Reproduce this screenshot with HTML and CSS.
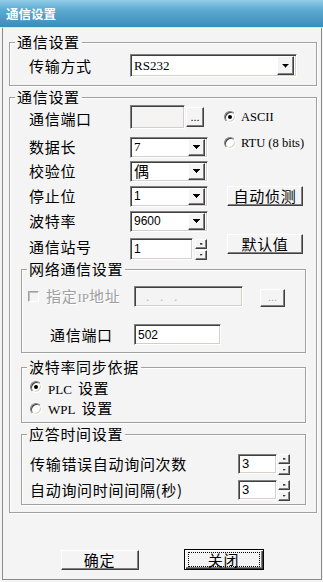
FILE: index.html
```html
<!DOCTYPE html>
<html lang="zh-CN">
<head>
  <meta charset="UTF-8">
  <title>通信设置</title>
  <link rel="stylesheet" href="styles.css">
</head>
<body>
  <div class="window">
    <div class="titlebar">通信设置</div>

    <div class="frame">
      <!-- transport -->
      <fieldset class="group outer group-top">
        <legend>通信设置</legend>
        <div class="top-body">
          <div class="row">
            <span class="label">传输方式</span>
            <div class="select sunken wide"><span class="value latin">RS232</span><span class="drop raised"></span></div>
          </div>
        </div>
      </fieldset>

      <!-- main settings -->
      <fieldset class="group outer group-main">
        <legend>通信设置</legend>
        <div class="main-body">
          <div class="row r1">
            <span class="label">通信端口</span>
            <div class="ctrl">
              <div class="field sunken off com-box"></div>
              <div class="mini-btn raised">...</div>
            </div>
            <div class="radio-item"><span class="radio on"></span><span class="latin">ASCII</span></div>
          </div>
          <div class="row r2">
            <span class="label">数据长</span>
            <div class="ctrl">
              <div class="select sunken"><span class="value latin">7</span><span class="drop raised"></span></div>
            </div>
            <div class="radio-item rtu"><span class="radio"></span><span class="latin">RTU (8 bits)</span></div>
          </div>
          <div class="row r3">
            <span class="label">校验位</span>
            <div class="ctrl">
              <div class="select sunken"><span class="value">偶</span><span class="drop raised"></span></div>
            </div>
          </div>
          <div class="row r4">
            <span class="label">停止位</span>
            <div class="ctrl">
              <div class="select sunken"><span class="value num">1</span><span class="drop raised"></span></div>
            </div>
            <div class="btn raised side-btn">自动侦测</div>
          </div>
          <div class="row r5">
            <span class="label">波特率</span>
            <div class="ctrl">
              <div class="select sunken"><span class="value num">9600</span><span class="drop raised"></span></div>
            </div>
          </div>
          <div class="row r6">
            <span class="label">通信站号</span>
            <div class="ctrl">
              <div class="field sunken station num">1</div>
              <div class="spin">
                <span class="spin-up raised"></span>
                <span class="spin-down raised"></span>
              </div>
            </div>
            <div class="btn raised side-btn default-btn">默认值</div>
          </div>

          <fieldset class="group inner net-group">
            <legend>网络通信设置</legend>
            <div class="net-body">
              <div class="ip-row">
                <div class="check-item off-text"><span class="check"></span><span>指定<span class="latin">IP</span>地址</span></div>
                <div class="field sunken off ip-box"><span>.</span><span>.</span><span>.</span></div>
                <div class="mini-btn raised ip-btn off-text">...</div>
              </div>
              <div class="port-row">
                <span class="port-label">通信端口</span>
                <div class="field sunken port-box num">502</div>
              </div>
            </div>
          </fieldset>

          <fieldset class="group inner baud-group">
            <legend>波特率同步依据</legend>
            <div class="baud-body">
              <div class="radio-row first"><span class="radio on"></span><span class="radio-text"><span class="latin">PLC</span> 设置</span></div>
              <div class="radio-row"><span class="radio"></span><span class="radio-text"><span class="latin">WPL</span> 设置</span></div>
            </div>
          </fieldset>

          <fieldset class="group inner reply-group">
            <legend>应答时间设置</legend>
            <div class="reply-body">
              <div class="reply-row">
                <span class="reply-label">传输错误自动询问次数</span>
                <div class="field sunken small-box num">3</div>
                <div class="spin">
                  <span class="spin-up raised"></span>
                  <span class="spin-down raised"></span>
                </div>
              </div>
              <div class="reply-row second">
                <span class="reply-label">自动询问时间间隔(秒)</span>
                <div class="field sunken small-box num">3</div>
                <div class="spin">
                  <span class="spin-up raised"></span>
                  <span class="spin-down raised"></span>
                </div>
              </div>
            </div>
          </fieldset>
        </div>
      </fieldset>

      <div class="actions">
        <div class="btn raised ok-btn">确定</div>
        <div class="btn close-btn"><span class="focus">关闭</span></div>
      </div>
    </div>
  </div>
</body>
</html>
```

FILE: styles.css
```css
* {
  box-sizing: border-box;
}

body {
  margin: 0;
  width: 323px;
  height: 582px;
  overflow: hidden;
  background: #f4f4f4;
  color: #000;
  font-family: "Noto Sans CJK SC", "Liberation Sans", sans-serif;
  font-size: 15px;
  line-height: 16px;
  letter-spacing: 0.7px;
  white-space: nowrap;
}

.window {
  height: 582px;
  display: flex;
  flex-direction: column;
}

.titlebar {
  height: 28px;
  padding-left: 6px;
  background: linear-gradient(#92cde8, #5eabd3 35%, #3a8cb9);
  border-bottom: 1px solid #d6e9f3;
  color: #fff;
  font-size: 12.5px;
  font-weight: bold;
  line-height: 27px;
  letter-spacing: 0;
}

.frame {
  flex: 1;
  display: flex;
  flex-direction: column;
  margin: 0 1px 2px 2px;
  border: 1px solid #8a8a8a;
  border-top: none;
}

/* group boxes */
.group {
  margin: 0;
  padding: 0;
  min-width: 0;
  border: 1px solid #a0a0a0;
  box-shadow: 1px 1px 0 #fff, inset 1px 1px 0 #fff;
}

.group legend {
  margin-left: 6px;
  padding: 0 2px;
  line-height: 16px;
  background: #f4f4f4;
}

.group.outer {
  margin: 0 4px 0 6px;
}

.group.outer legend {
  margin-left: 5px;
}

.group-top {
  margin-top: 6px !important;
}

.group-main {
  margin-top: 3px !important;
}

.top-body {
  padding: 4px 0 8px 19px;
}

.top-body .row {
  height: 23px;
}

.main-body {
  padding: 0 10px 7px 11px;
}

.row {
  display: flex;
  align-items: center;
  height: 22px;
}

.main-body .row {
  padding-left: 8px;
}

.r1 { height: 24px; }
.r2 { margin-top: 7px; }
.r3 { margin-top: 2px; }
.r4 { margin-top: 3px; }
.r5 { margin-top: 3px; }
.r6 { margin-top: 6px; }

.label {
  width: 101px;
  flex: none;
}

.r1 .label {
  padding-top: 4px;
}

.r6 .label {
  padding-bottom: 4px;
}

.ctrl {
  width: 94px;
  flex: none;
  display: flex;
  align-items: center;
}

.latin {
  font-family: "Liberation Serif", serif;
  font-size: 13px;
  letter-spacing: 0;
}

.num {
  font-family: "Liberation Sans", sans-serif;
  font-size: 12px;
  letter-spacing: 0;
}

/* 3d borders */
.sunken {
  background: #fff;
  border: 1px solid;
  border-color: #808080 #fff #fff #808080;
  box-shadow: inset 1px 1px 0 #404040, inset -1px -1px 0 #d4d0c8;
}

.raised {
  background: #f4f4f4;
  border: 1px solid;
  border-color: #fff #404040 #404040 #fff;
  box-shadow: inset -1px -1px 0 #808080;
}

/* dropdowns */
.select {
  display: flex;
  align-items: center;
  width: 78px;
  height: 21px;
  padding: 2px;
}

.select.wide {
  width: 167px;
  height: 23px;
}

.select .value {
  flex: 1;
  padding-left: 1px;
}

.drop {
  width: 17px;
  height: 17px;
  flex: none;
  display: flex;
  align-items: center;
  justify-content: center;
}

.select.wide .drop {
  height: 19px;
}

.drop::after {
  content: "";
  width: 7px;
  height: 4px;
  background: #000;
  clip-path: polygon(0 0, 7px 0, 7px 1px, 6px 1px, 6px 2px, 5px 2px, 5px 3px, 4px 3px, 4px 4px, 3px 4px, 3px 3px, 2px 3px, 2px 2px, 1px 2px, 1px 1px, 0 1px);
}

/* text fields */
.field {
  display: flex;
  align-items: center;
  padding-left: 3px;
}

.field.off {
  background: #f4f4f4;
}

.com-box {
  width: 55px;
  height: 24px;
}

.mini-btn {
  display: flex;
  justify-content: center;
  align-items: flex-end;
  padding-bottom: 3px;
  font-family: "Liberation Sans", sans-serif;
  font-size: 11px;
  line-height: 11px;
  letter-spacing: 0;
}

.r1 .mini-btn {
  width: 18px;
  height: 20px;
  margin-left: 1px;
}

.station {
  width: 63px;
  height: 22px;
}

.spin {
  display: flex;
  flex-direction: column;
  gap: 1px;
  width: 12px;
  margin-left: 2px;
}

.spin span {
  height: 10px;
  display: flex;
  align-items: center;
  justify-content: center;
}

.spin-up::after,
.spin-down::after {
  content: "";
  width: 3px;
  height: 2px;
  background: #000;
}

.spin-up::after {
  clip-path: polygon(1px 0, 2px 0, 2px 1px, 3px 1px, 3px 2px, 0 2px, 0 1px, 1px 1px);
}

.spin-down::after {
  clip-path: polygon(0 0, 3px 0, 3px 1px, 2px 1px, 2px 2px, 1px 2px, 1px 1px, 0 1px);
}

/* radios */
.radio-item,
.radio-row {
  display: flex;
  align-items: center;
  gap: 5px;
}

.radio-item {
  flex: none;
}

.radio-item .latin {
  font-size: 12.5px;
}

.rtu {
  margin-top: -8px;
}

.radio {
  width: 12px;
  height: 12px;
  flex: none;
  border-radius: 50%;
  background: #fff;
  border: 1px solid;
  border-color: #808080 #fff #fff #808080;
  box-shadow: inset 1px 1px 0 #404040, inset -1px -1px 0 #d4d0c8;
  display: flex;
  align-items: center;
  justify-content: center;
}

.radio.on::after {
  content: "";
  width: 4px;
  height: 4px;
  border-radius: 50%;
  background: #000;
}

/* push buttons */
.btn {
  display: flex;
  align-items: center;
  justify-content: center;
  flex: none;
}

.side-btn {
  width: 76px;
  height: 20px;
  margin-left: 3px;
}

.default-btn {
  margin-top: -10px;
}

/* network group */
.net-group {
  margin-top: 1px;
}

.net-body {
  padding: 9px 0 7px 6px;
}

.ip-row,
.port-row {
  display: flex;
  align-items: flex-end;
  height: 21px;
}

.port-row {
  align-items: center;
  margin-top: 17px;
}

.check-item {
  width: 106px;
  flex: none;
  display: flex;
  align-items: center;
  gap: 7px;
  align-self: center;
}

.off-text {
  color: #a0a0a0;
  text-shadow: 1px 1px 0 #fff;
}

.check {
  width: 11px;
  height: 11px;
  border: 1px solid;
  border-color: #a0a0a0 #fff #fff #a0a0a0;
  box-shadow: inset 1px 1px 0 #c0c0c0;
  background: #f4f4f4;
}

.ip-box {
  width: 109px;
  height: 21px;
  padding-left: 11px;
  gap: 10px;
  color: #b0b0b0;
  font-family: "Liberation Sans", sans-serif;
  font-size: 12px;
}

.ip-btn {
  width: 25px;
  height: 18px;
  margin-left: 17px;
}

.port-label {
  width: 84px;
  margin-left: 22px;
  flex: none;
}

.port-box {
  width: 87px;
  height: 21px;
}

/* baud sync group */
.baud-group {
  margin-top: 6px;
}

.baud-body {
  padding: 1px 0 2px 8px;
}

.radio-row {
  height: 22px;
  gap: 6px;
}

.radio-row.first .radio-text {
  padding-top: 4px;
}

.radio-row .latin {
  margin-right: 2px;
}

/* reply group */
.reply-group {
  margin-top: 3px;
}

.reply-body {
  padding: 12px 0 4px 8px;
}

.reply-row {
  display: flex;
  align-items: center;
  height: 20px;
}

.reply-row.second {
  margin-top: 6px;
}

.reply-label {
  width: 208px;
  flex: none;
}

.small-box {
  width: 39px;
  height: 20px;
  font-size: 13px;
}

.reply-row .spin {
  margin-left: 1px;
}

.reply-row .spin span {
  height: 10px;
}

/* bottom buttons */
.actions {
  display: flex;
  justify-content: center;
  align-items: center;
  gap: 45px;
  margin-top: 36px;
}

.ok-btn {
  width: 78px;
  height: 20px;
}

.close-btn {
  width: 80px;
  height: 21px;
  padding: 2px 3px;
  background: #f4f4f4;
  border: 1px solid #000;
  box-shadow: inset 1px 1px 0 #fff, inset -1px -1px 0 #404040, inset -2px -2px 0 #808080;
}

.close-btn .focus {
  flex: 1;
  height: 100%;
  display: flex;
  align-items: center;
  justify-content: center;
  border: 1px dotted #000;
}
```
